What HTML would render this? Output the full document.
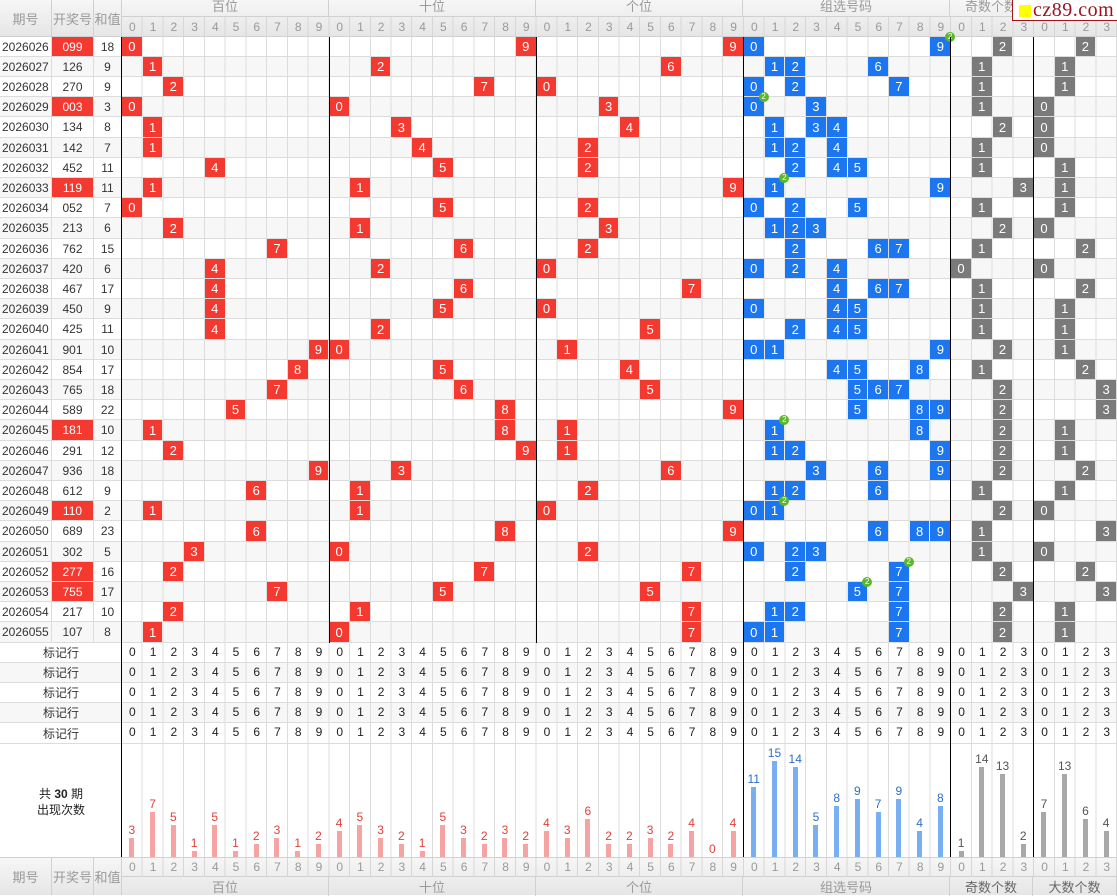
<!DOCTYPE html>
<html><head><meta charset="utf-8"><style>
*{margin:0;padding:0}
body{width:1117px;height:895px;overflow:hidden;background:#fff;font-family:"Liberation Sans","Noto Sans CJK SC",sans-serif;font-size:12px;color:#333;position:relative}
.hd{position:absolute;left:0;width:1117px;background:linear-gradient(#f6f6f6,#e6e6e6);color:#999;box-sizing:border-box;border-bottom:1px solid #d0d0d0}
.hd span{position:absolute;top:0;height:100%;display:flex;align-items:center;justify-content:center;border-right:1px solid #d0d0d0;box-sizing:border-box;font-size:13px}
.dg{position:absolute;left:122px;top:0;white-space:nowrap;letter-spacing:14.058px;padding-left:7.03px;font-size:12px}
.row{position:relative;height:20px;box-sizing:border-box;border-bottom:1px solid #dcdcdc;background:repeating-linear-gradient(to right,transparent 0 19.73px,#dcdcdc 19.73px 20.73px) 122px 0/995px 100% no-repeat,#fff}
.row:nth-child(5n){height:21px}
.row.s{background:repeating-linear-gradient(to right,transparent 0 19.73px,#dcdcdc 19.73px 20.73px) 122px 0/995px 100% no-repeat,#f7f7f7}
.row a{position:absolute;top:0;height:100%;display:flex;align-items:center;justify-content:center;border-right:1px solid #dcdcdc;box-sizing:border-box;text-decoration:none;color:#333}
.row a:nth-child(1){left:0;width:52px;justify-content:flex-start;padding-left:2px}
.row a:nth-child(2){left:52px;width:42px}
.row a:nth-child(3){left:94px;width:28px}
.row a.w{left:0;width:122px;justify-content:center;padding:0;border:none}
.row a.h{background:#f43a30;color:#fff}
.row .dg{line-height:19px;color:#222}
.row i{position:absolute;top:0;left:calc(122px + var(--c)*20.73px);width:19.7px;height:100%;display:flex;align-items:center;justify-content:center;color:#fff;font-style:normal;font-size:13px}
.r{background:#f43a30}.b{background:#1b76ef}.g{background:#7a7a7a}
i em{position:absolute;right:-5px;top:-5px;width:10px;height:10px;border-radius:50%;background:#5cb82a;color:#fff;font-size:8px;line-height:10px;text-align:center;font-style:normal;z-index:3}
.st{position:absolute;left:0;top:744px;width:1117px;height:113px;background:repeating-linear-gradient(to right,transparent 0 19.73px,#dcdcdc 19.73px 20.73px) 122px 0/995px 100% no-repeat,#fff}
.bar{position:absolute;bottom:0;left:calc(122px + var(--c)*20.73px);width:19.7px;height:calc(var(--n)*6.4px + 15px);text-align:center;font-size:12px;line-height:14px;background:linear-gradient(var(--k),var(--k)) center bottom/5px calc(100% - 15px) no-repeat}
.R{--k:#f6a3a3;color:#e0413a}.B{--k:#78aef2;color:#2f6fc8}.G{--k:#a8a8a8;color:#555}
.vl{position:absolute;top:37px;height:820px;width:1px;background:#000;z-index:5}
</style></head><body>

<div class="hd" style="top:0;height:37px">
<span style="left:0;width:52px">期号</span><span style="left:52px;width:42px">开奖号</span><span style="left:94px;width:28px">和值</span>
<span style="left:122px;width:207px;height:17px;border-bottom:1px solid #d0d0d0;align-items:flex-start;line-height:13px">百位</span>
<span style="left:329px;width:207px;height:17px;border-bottom:1px solid #d0d0d0;align-items:flex-start;line-height:13px">十位</span>
<span style="left:536px;width:207px;height:17px;border-bottom:1px solid #d0d0d0;align-items:flex-start;line-height:13px">个位</span>
<span style="left:743px;width:207px;height:17px;border-bottom:1px solid #d0d0d0;align-items:flex-start;line-height:13px">组选号码</span>
<span style="left:950px;width:83px;height:17px;border-bottom:1px solid #d0d0d0;align-items:flex-start;line-height:13px">奇数个数</span>
<span style="left:1033px;width:84px;height:17px;border-bottom:1px solid #d0d0d0;align-items:flex-start;line-height:13px">大数个数</span>
<div class="dg" style="top:17px;line-height:20px;height:20px;background:repeating-linear-gradient(to right,transparent 0 19.73px,#d6d6d6 19.73px 20.73px);width:995px;padding-left:7.03px;box-sizing:border-box;left:122px">012345678901234567890123456789012345678901230123</div>
</div>
<div style="position:absolute;left:1012px;top:0;width:105px;height:21px;background:#fff;border-left:1px solid #a0141e;border-bottom:1px solid #a0141e;box-sizing:border-box;z-index:9">
<div style="position:absolute;left:6px;top:5px;width:12px;height:12px;background:#ffff00"></div>
<div style="position:absolute;left:20px;top:-1px;font-family:'Liberation Serif',serif;font-size:20px;color:#9b111e;letter-spacing:0.5px;line-height:22px">cz89.com</div>
</div>

<div style="position:absolute;left:0;top:37px;width:1117px">
<div class="row"><a>2026026</a><a class="h">099</a><a>18</a><i class="r" style="--c:0">0</i><i class="r" style="--c:19">9</i><i class="r" style="--c:29">9</i><i class="b" style="--c:30">0</i><i class="b" style="--c:39">9<em>2</em></i><i class="g" style="--c:42">2</i><i class="g" style="--c:46">2</i></div>
<div class="row s"><a>2026027</a><a>126</a><a>9</a><i class="r" style="--c:1">1</i><i class="r" style="--c:12">2</i><i class="r" style="--c:26">6</i><i class="b" style="--c:31">1</i><i class="b" style="--c:32">2</i><i class="b" style="--c:36">6</i><i class="g" style="--c:41">1</i><i class="g" style="--c:45">1</i></div>
<div class="row"><a>2026028</a><a>270</a><a>9</a><i class="r" style="--c:2">2</i><i class="r" style="--c:17">7</i><i class="r" style="--c:20">0</i><i class="b" style="--c:30">0</i><i class="b" style="--c:32">2</i><i class="b" style="--c:37">7</i><i class="g" style="--c:41">1</i><i class="g" style="--c:45">1</i></div>
<div class="row s"><a>2026029</a><a class="h">003</a><a>3</a><i class="r" style="--c:0">0</i><i class="r" style="--c:10">0</i><i class="r" style="--c:23">3</i><i class="b" style="--c:30">0<em>2</em></i><i class="b" style="--c:33">3</i><i class="g" style="--c:41">1</i><i class="g" style="--c:44">0</i></div>
<div class="row"><a>2026030</a><a>134</a><a>8</a><i class="r" style="--c:1">1</i><i class="r" style="--c:13">3</i><i class="r" style="--c:24">4</i><i class="b" style="--c:31">1</i><i class="b" style="--c:33">3</i><i class="b" style="--c:34">4</i><i class="g" style="--c:42">2</i><i class="g" style="--c:44">0</i></div>
<div class="row s"><a>2026031</a><a>142</a><a>7</a><i class="r" style="--c:1">1</i><i class="r" style="--c:14">4</i><i class="r" style="--c:22">2</i><i class="b" style="--c:31">1</i><i class="b" style="--c:32">2</i><i class="b" style="--c:34">4</i><i class="g" style="--c:41">1</i><i class="g" style="--c:44">0</i></div>
<div class="row"><a>2026032</a><a>452</a><a>11</a><i class="r" style="--c:4">4</i><i class="r" style="--c:15">5</i><i class="r" style="--c:22">2</i><i class="b" style="--c:32">2</i><i class="b" style="--c:34">4</i><i class="b" style="--c:35">5</i><i class="g" style="--c:41">1</i><i class="g" style="--c:45">1</i></div>
<div class="row s"><a>2026033</a><a class="h">119</a><a>11</a><i class="r" style="--c:1">1</i><i class="r" style="--c:11">1</i><i class="r" style="--c:29">9</i><i class="b" style="--c:31">1<em>2</em></i><i class="b" style="--c:39">9</i><i class="g" style="--c:43">3</i><i class="g" style="--c:45">1</i></div>
<div class="row"><a>2026034</a><a>052</a><a>7</a><i class="r" style="--c:0">0</i><i class="r" style="--c:15">5</i><i class="r" style="--c:22">2</i><i class="b" style="--c:30">0</i><i class="b" style="--c:32">2</i><i class="b" style="--c:35">5</i><i class="g" style="--c:41">1</i><i class="g" style="--c:45">1</i></div>
<div class="row s"><a>2026035</a><a>213</a><a>6</a><i class="r" style="--c:2">2</i><i class="r" style="--c:11">1</i><i class="r" style="--c:23">3</i><i class="b" style="--c:31">1</i><i class="b" style="--c:32">2</i><i class="b" style="--c:33">3</i><i class="g" style="--c:42">2</i><i class="g" style="--c:44">0</i></div>
<div class="row"><a>2026036</a><a>762</a><a>15</a><i class="r" style="--c:7">7</i><i class="r" style="--c:16">6</i><i class="r" style="--c:22">2</i><i class="b" style="--c:32">2</i><i class="b" style="--c:36">6</i><i class="b" style="--c:37">7</i><i class="g" style="--c:41">1</i><i class="g" style="--c:46">2</i></div>
<div class="row s"><a>2026037</a><a>420</a><a>6</a><i class="r" style="--c:4">4</i><i class="r" style="--c:12">2</i><i class="r" style="--c:20">0</i><i class="b" style="--c:30">0</i><i class="b" style="--c:32">2</i><i class="b" style="--c:34">4</i><i class="g" style="--c:40">0</i><i class="g" style="--c:44">0</i></div>
<div class="row"><a>2026038</a><a>467</a><a>17</a><i class="r" style="--c:4">4</i><i class="r" style="--c:16">6</i><i class="r" style="--c:27">7</i><i class="b" style="--c:34">4</i><i class="b" style="--c:36">6</i><i class="b" style="--c:37">7</i><i class="g" style="--c:41">1</i><i class="g" style="--c:46">2</i></div>
<div class="row s"><a>2026039</a><a>450</a><a>9</a><i class="r" style="--c:4">4</i><i class="r" style="--c:15">5</i><i class="r" style="--c:20">0</i><i class="b" style="--c:30">0</i><i class="b" style="--c:34">4</i><i class="b" style="--c:35">5</i><i class="g" style="--c:41">1</i><i class="g" style="--c:45">1</i></div>
<div class="row"><a>2026040</a><a>425</a><a>11</a><i class="r" style="--c:4">4</i><i class="r" style="--c:12">2</i><i class="r" style="--c:25">5</i><i class="b" style="--c:32">2</i><i class="b" style="--c:34">4</i><i class="b" style="--c:35">5</i><i class="g" style="--c:41">1</i><i class="g" style="--c:45">1</i></div>
<div class="row s"><a>2026041</a><a>901</a><a>10</a><i class="r" style="--c:9">9</i><i class="r" style="--c:10">0</i><i class="r" style="--c:21">1</i><i class="b" style="--c:30">0</i><i class="b" style="--c:31">1</i><i class="b" style="--c:39">9</i><i class="g" style="--c:42">2</i><i class="g" style="--c:45">1</i></div>
<div class="row"><a>2026042</a><a>854</a><a>17</a><i class="r" style="--c:8">8</i><i class="r" style="--c:15">5</i><i class="r" style="--c:24">4</i><i class="b" style="--c:34">4</i><i class="b" style="--c:35">5</i><i class="b" style="--c:38">8</i><i class="g" style="--c:41">1</i><i class="g" style="--c:46">2</i></div>
<div class="row s"><a>2026043</a><a>765</a><a>18</a><i class="r" style="--c:7">7</i><i class="r" style="--c:16">6</i><i class="r" style="--c:25">5</i><i class="b" style="--c:35">5</i><i class="b" style="--c:36">6</i><i class="b" style="--c:37">7</i><i class="g" style="--c:42">2</i><i class="g" style="--c:47">3</i></div>
<div class="row"><a>2026044</a><a>589</a><a>22</a><i class="r" style="--c:5">5</i><i class="r" style="--c:18">8</i><i class="r" style="--c:29">9</i><i class="b" style="--c:35">5</i><i class="b" style="--c:38">8</i><i class="b" style="--c:39">9</i><i class="g" style="--c:42">2</i><i class="g" style="--c:47">3</i></div>
<div class="row s"><a>2026045</a><a class="h">181</a><a>10</a><i class="r" style="--c:1">1</i><i class="r" style="--c:18">8</i><i class="r" style="--c:21">1</i><i class="b" style="--c:31">1<em>2</em></i><i class="b" style="--c:38">8</i><i class="g" style="--c:42">2</i><i class="g" style="--c:45">1</i></div>
<div class="row"><a>2026046</a><a>291</a><a>12</a><i class="r" style="--c:2">2</i><i class="r" style="--c:19">9</i><i class="r" style="--c:21">1</i><i class="b" style="--c:31">1</i><i class="b" style="--c:32">2</i><i class="b" style="--c:39">9</i><i class="g" style="--c:42">2</i><i class="g" style="--c:45">1</i></div>
<div class="row s"><a>2026047</a><a>936</a><a>18</a><i class="r" style="--c:9">9</i><i class="r" style="--c:13">3</i><i class="r" style="--c:26">6</i><i class="b" style="--c:33">3</i><i class="b" style="--c:36">6</i><i class="b" style="--c:39">9</i><i class="g" style="--c:42">2</i><i class="g" style="--c:46">2</i></div>
<div class="row"><a>2026048</a><a>612</a><a>9</a><i class="r" style="--c:6">6</i><i class="r" style="--c:11">1</i><i class="r" style="--c:22">2</i><i class="b" style="--c:31">1</i><i class="b" style="--c:32">2</i><i class="b" style="--c:36">6</i><i class="g" style="--c:41">1</i><i class="g" style="--c:45">1</i></div>
<div class="row s"><a>2026049</a><a class="h">110</a><a>2</a><i class="r" style="--c:1">1</i><i class="r" style="--c:11">1</i><i class="r" style="--c:20">0</i><i class="b" style="--c:30">0</i><i class="b" style="--c:31">1<em>2</em></i><i class="g" style="--c:42">2</i><i class="g" style="--c:44">0</i></div>
<div class="row"><a>2026050</a><a>689</a><a>23</a><i class="r" style="--c:6">6</i><i class="r" style="--c:18">8</i><i class="r" style="--c:29">9</i><i class="b" style="--c:36">6</i><i class="b" style="--c:38">8</i><i class="b" style="--c:39">9</i><i class="g" style="--c:41">1</i><i class="g" style="--c:47">3</i></div>
<div class="row s"><a>2026051</a><a>302</a><a>5</a><i class="r" style="--c:3">3</i><i class="r" style="--c:10">0</i><i class="r" style="--c:22">2</i><i class="b" style="--c:30">0</i><i class="b" style="--c:32">2</i><i class="b" style="--c:33">3</i><i class="g" style="--c:41">1</i><i class="g" style="--c:44">0</i></div>
<div class="row"><a>2026052</a><a class="h">277</a><a>16</a><i class="r" style="--c:2">2</i><i class="r" style="--c:17">7</i><i class="r" style="--c:27">7</i><i class="b" style="--c:32">2</i><i class="b" style="--c:37">7<em>2</em></i><i class="g" style="--c:42">2</i><i class="g" style="--c:46">2</i></div>
<div class="row s"><a>2026053</a><a class="h">755</a><a>17</a><i class="r" style="--c:7">7</i><i class="r" style="--c:15">5</i><i class="r" style="--c:25">5</i><i class="b" style="--c:35">5<em>2</em></i><i class="b" style="--c:37">7</i><i class="g" style="--c:43">3</i><i class="g" style="--c:47">3</i></div>
<div class="row"><a>2026054</a><a>217</a><a>10</a><i class="r" style="--c:2">2</i><i class="r" style="--c:11">1</i><i class="r" style="--c:27">7</i><i class="b" style="--c:31">1</i><i class="b" style="--c:32">2</i><i class="b" style="--c:37">7</i><i class="g" style="--c:42">2</i><i class="g" style="--c:45">1</i></div>
<div class="row s"><a>2026055</a><a>107</a><a>8</a><i class="r" style="--c:1">1</i><i class="r" style="--c:10">0</i><i class="r" style="--c:27">7</i><i class="b" style="--c:30">0</i><i class="b" style="--c:31">1</i><i class="b" style="--c:37">7</i><i class="g" style="--c:42">2</i><i class="g" style="--c:45">1</i></div>
<div class="row"><a class="w">标记行</a><span class="dg">012345678901234567890123456789012345678901230123</span></div>
<div class="row s"><a class="w">标记行</a><span class="dg">012345678901234567890123456789012345678901230123</span></div>
<div class="row"><a class="w">标记行</a><span class="dg">012345678901234567890123456789012345678901230123</span></div>
<div class="row s"><a class="w">标记行</a><span class="dg">012345678901234567890123456789012345678901230123</span></div>
<div class="row"><a class="w">标记行</a><span class="dg">012345678901234567890123456789012345678901230123</span></div>
</div>

<div class="st">
<div style="position:absolute;left:0;width:122px;top:42px;text-align:center;line-height:16px;color:#222">共 <b>30</b> 期<br>出现次数</div>
<div class="bar R" style="--c:0;--n:3">3</div><div class="bar R" style="--c:1;--n:7">7</div><div class="bar R" style="--c:2;--n:5">5</div><div class="bar R" style="--c:3;--n:1">1</div><div class="bar R" style="--c:4;--n:5">5</div><div class="bar R" style="--c:5;--n:1">1</div><div class="bar R" style="--c:6;--n:2">2</div><div class="bar R" style="--c:7;--n:3">3</div><div class="bar R" style="--c:8;--n:1">1</div><div class="bar R" style="--c:9;--n:2">2</div>
<div class="bar R" style="--c:10;--n:4">4</div><div class="bar R" style="--c:11;--n:5">5</div><div class="bar R" style="--c:12;--n:3">3</div><div class="bar R" style="--c:13;--n:2">2</div><div class="bar R" style="--c:14;--n:1">1</div><div class="bar R" style="--c:15;--n:5">5</div><div class="bar R" style="--c:16;--n:3">3</div><div class="bar R" style="--c:17;--n:2">2</div><div class="bar R" style="--c:18;--n:3">3</div><div class="bar R" style="--c:19;--n:2">2</div>
<div class="bar R" style="--c:20;--n:4">4</div><div class="bar R" style="--c:21;--n:3">3</div><div class="bar R" style="--c:22;--n:6">6</div><div class="bar R" style="--c:23;--n:2">2</div><div class="bar R" style="--c:24;--n:2">2</div><div class="bar R" style="--c:25;--n:3">3</div><div class="bar R" style="--c:26;--n:2">2</div><div class="bar R" style="--c:27;--n:4">4</div><div class="bar R" style="--c:28;--n:0">0</div><div class="bar R" style="--c:29;--n:4">4</div>
<div class="bar B" style="--c:30;--n:11">11</div><div class="bar B" style="--c:31;--n:15">15</div><div class="bar B" style="--c:32;--n:14">14</div><div class="bar B" style="--c:33;--n:5">5</div><div class="bar B" style="--c:34;--n:8">8</div><div class="bar B" style="--c:35;--n:9">9</div><div class="bar B" style="--c:36;--n:7">7</div><div class="bar B" style="--c:37;--n:9">9</div><div class="bar B" style="--c:38;--n:4">4</div><div class="bar B" style="--c:39;--n:8">8</div>
<div class="bar G" style="--c:40;--n:1">1</div><div class="bar G" style="--c:41;--n:14">14</div><div class="bar G" style="--c:42;--n:13">13</div><div class="bar G" style="--c:43;--n:2">2</div>
<div class="bar G" style="--c:44;--n:7">7</div><div class="bar G" style="--c:45;--n:13">13</div><div class="bar G" style="--c:46;--n:6">6</div><div class="bar G" style="--c:47;--n:4">4</div>
</div>

<div class="hd" style="top:857px;height:38px;border-top:1px solid #d0d0d0;border-bottom:none">
<span style="left:0;width:52px">期号</span><span style="left:52px;width:42px">开奖号</span><span style="left:94px;width:28px">和值</span>
<div class="dg" style="top:0;line-height:19px;height:19px;background:repeating-linear-gradient(to right,transparent 0 19.73px,#d6d6d6 19.73px 20.73px);width:995px;box-sizing:border-box;border-bottom:1px solid #d0d0d0">012345678901234567890123456789012345678901230123</div>
<span style="left:122px;width:207px;top:19px;height:19px">百位</span>
<span style="left:329px;width:207px;top:19px;height:19px">十位</span>
<span style="left:536px;width:207px;top:19px;height:19px">个位</span>
<span style="left:743px;width:207px;top:19px;height:19px">组选号码</span>
<span style="left:950px;width:83px;top:19px;height:19px;color:#666">奇数个数</span>
<span style="left:1033px;width:84px;top:19px;height:19px;color:#666">大数个数</span>
</div>

<div class="vl" style="left:121px"></div><div class="vl" style="left:329px;height:606px"></div><div class="vl" style="left:536px;height:606px"></div><div class="vl" style="left:743px"></div><div class="vl" style="left:950px"></div><div class="vl" style="left:1033px"></div>
</body></html>
